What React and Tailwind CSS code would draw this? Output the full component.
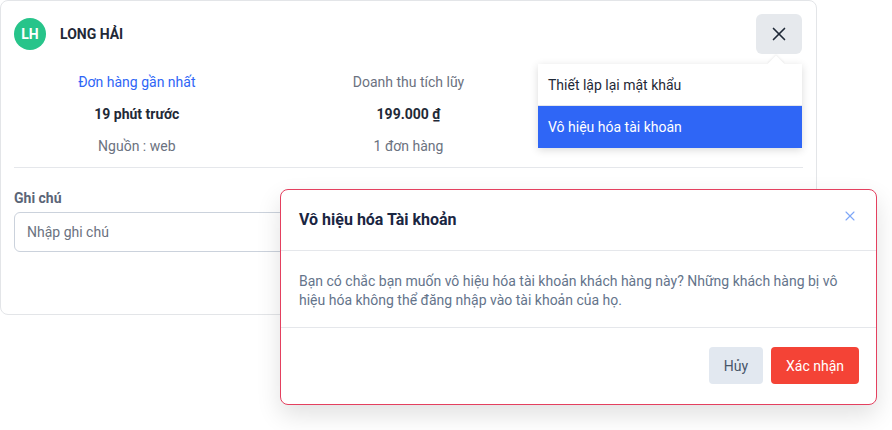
import { X } from "lucide-react";

const Stat = ({ label, value, sub, accent }) => (
  <div className="flex flex-col items-center">
    <p className={`text-sm leading-5 ${accent ? "text-[#2f66f6]" : "text-[#6b7280]"}`}>{label}</p>
    <p className="mt-3 text-sm leading-5 font-bold text-[#1f2937]">{value}</p>
    <p className="mt-3 text-sm leading-5 text-[#6b7280]">{sub}</p>
  </div>
);

const App = () => {
  return (
    <div className="relative w-[892px] h-[430px] bg-white font-['Roboto',sans-serif] overflow-hidden">
      {/* customer card */}
      <div className="w-[817px] h-[315px] border border-[#e3e5e8] rounded-lg">
        <div className="flex items-center justify-between pl-[13px] pr-[14px] pt-[13px]">
          <div className="flex items-center gap-[14px]">
            <div className="w-8 h-8 rounded-full bg-[#27c48a] flex items-center justify-center text-white text-sm font-bold">
              LH
            </div>
            <span className="text-sm font-bold text-[#1f2937]">LONG HẢI</span>
          </div>
          <button className="w-[46px] h-[40px] rounded-md bg-[#e6e9ed] flex items-center justify-center text-[#1f2937]">
            <X className="w-[22px] h-[22px]" strokeWidth={1.8} />
          </button>
        </div>

        <div className="grid grid-cols-3 mt-[18px]">
          <Stat label="Đơn hàng gần nhất" value="19 phút trước" sub="Nguồn : web" accent />
          <Stat label="Doanh thu tích lũy" value="199.000 ₫" sub="1 đơn hàng" />
          <Stat label="Giá trị trung bình đơn hàng" value="199.000 ₫" sub="" />
        </div>

        <div className="mx-[13px] mt-[11px] border-t border-[#e5e7eb]" />

        <div className="px-[13px] pt-[20px]">
          <p className="text-sm font-bold text-[#5b6577]">Ghi chú</p>
          <input
            className="mt-[4px] w-full h-10 rounded-md border border-[#cbd2dc] px-3 text-sm text-[#374151] placeholder:text-[#6b7280] outline-none"
            placeholder="Nhập ghi chú"
          />
        </div>
      </div>

      {/* action dropdown */}
      <div className="absolute left-[538px] top-[64px] w-[264px] bg-white/95 shadow-[0_2px_8px_rgba(0,0,0,0.15)]">
        <div className="absolute -top-[6px] right-[20px] w-3 h-3 rotate-45 bg-white shadow-[-1px_-1px_2px_rgba(0,0,0,0.06)]" />
        <div className="relative h-[42px] flex items-center px-[10px] text-sm text-[#1f2937] border-b border-[#e5e7eb] bg-white/95">
          Thiết lập lại mật khẩu
        </div>
        <div className="h-[42px] flex items-center px-[10px] text-sm text-white bg-[#2f66f6]">
          Vô hiệu hóa tài khoản
        </div>
      </div>

      {/* confirm modal */}
      <div className="absolute left-[280px] top-[189px] w-[597px] h-[216px] bg-white border border-[#e4405f] rounded-lg shadow-[0_10px_24px_rgba(0,0,0,0.12)] flex flex-col">
        <div className="h-[61px] flex items-center justify-between pl-[18px] pr-[18px] border-b border-[#e5e7eb]">
          <h3 className="text-base font-bold text-[#1a2642]">Vô hiệu hóa Tài khoản</h3>
          <X className="w-[16px] h-[16px] text-[#7ea6f7] -mt-[8px]" strokeWidth={1.6} />
        </div>
        <div className="h-[77px] px-[18px] pt-[21px] border-b border-[#e5e7eb]">
          <p className="text-sm leading-[19px] text-[#64748b]">
            Bạn có chắc bạn muốn vô hiệu hóa tài khoản khách hàng này? Những khách hàng bị vô hiệu hóa không thể đăng nhập vào tài khoản của họ.
          </p>
        </div>
        <div className="flex-1 flex items-start justify-end gap-2 pr-[17px] pt-[19px]">
          <button className="h-[37px] w-[54px] rounded bg-[#e2e8f0] text-sm text-[#475569]">Hủy</button>
          <button className="h-[37px] w-[88px] rounded bg-[#f44336] text-sm text-white">Xác nhận</button>
        </div>
      </div>
    </div>
  );
};

export default App;
